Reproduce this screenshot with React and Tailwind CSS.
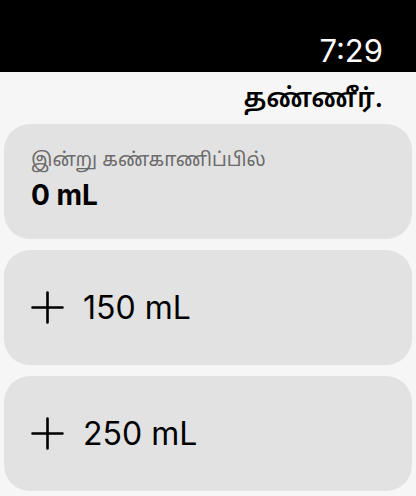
import React from 'react';

const font = { fontFamily: 'Inter, "Noto Sans Tamil", "Noto Sans", sans-serif' };

const Plus = () => (
  <svg className="w-[33px] h-[33px] shrink-0" viewBox="0 0 33 33" fill="none" stroke="#000" strokeWidth={2.6} strokeLinecap="round">
    <path d="M16.5 1.5v30M1.5 16.5h30" />
  </svg>
);

const AddButton = ({ amount }) => (
  <button className="w-full h-[115px] rounded-[26px] bg-[#e2e2e2] flex items-center gap-[19px] pl-[27px] text-left">
    <Plus />
    <span className="text-[32px] text-black">{amount} mL</span>
  </button>
);

export default function App() {
  return (
    <div className="w-[416px] h-[496px] bg-[#f6f6f6] overflow-hidden" style={font}>
      {/* Status bar */}
      <div className="h-[72px] bg-black flex items-end justify-end pr-[33px] pb-[4px]">
        <span className="text-white text-[31px] leading-none mb-[2px]">7:29</span>
      </div>

      {/* Title */}
      <div className="h-[52px] flex items-center justify-end pr-[33px]">
        <h1 className="text-[26px] font-semibold text-black leading-none">தண்ணீர்.</h1>
      </div>

      <div className="px-[4px] flex flex-col gap-[11px]">
        {/* Today summary */}
        <div className="h-[115px] rounded-[26px] bg-[#e2e2e2] pl-[27px] pt-[22px]">
          <div className="text-[19px] text-[#6b6b6b] leading-[28px]">இன்று கண்காணிப்பில்</div>
          <div className="text-[28px] font-bold text-black leading-[34px] mt-[4px]">0 mL</div>
        </div>

        <AddButton amount={150} />
        <AddButton amount={250} />
      </div>
    </div>
  );
}
